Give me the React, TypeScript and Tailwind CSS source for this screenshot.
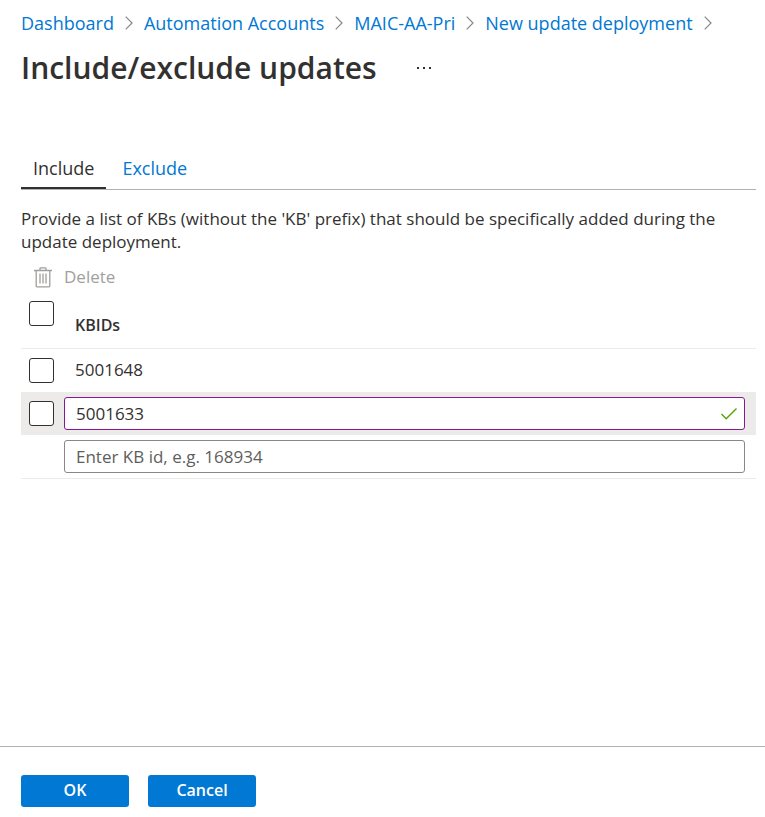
import { useState } from "react";

const crumbs = ["Dashboard", "Automation Accounts", "MAIC-AA-Pri", "New update deployment"];

function Chevron() {
  return (
    <svg aria-hidden="true" viewBox="0 0 8 14" className="h-3.5 w-2 shrink-0" fill="none" stroke="#8a8886" strokeWidth="1.2">
      <path d="M.7 .7 7 7 .7 13.3" />
    </svg>
  );
}

function TrashIcon() {
  return (
    <svg aria-hidden="true" viewBox="0 0 18 21" className="h-[21px] w-[18px] shrink-0" fill="none" stroke="#a19f9d" strokeWidth="1.3">
      <path d="M0 3.5h18M6 3.5V1.6Q6 .9 6.7 .9h4.6Q12 .9 12 1.6v1.9M2.2 3.5v15.6q0 .8.8.8h12q.8 0 .8-.8V3.5" />
      <path d="M6 6.5v10M9 6.5v10M12 6.5v10" />
    </svg>
  );
}

function Check({ label }: { label: string }) {
  return (
    <input
      type="checkbox"
      aria-label={label}
      className="block size-[25px] appearance-none rounded-[3px] border border-[#323130] bg-white checked:bg-[#0078d4]"
    />
  );
}

export default function App() {
  const [kb, setKb] = useState("5001633");
  const [next, setNext] = useState("");

  return (
    <div className="flex min-h-screen flex-col bg-white font-['Open_Sans','Noto_Sans',sans-serif] text-[17px] text-[#323130]">
      <main className="flex-1 pr-[9px] pl-[21px]">
        <nav aria-label="Breadcrumb" className="pt-2.5">
          <ol className="flex items-center gap-[11px] text-lg leading-[26px] whitespace-nowrap text-[#0078d4]">
            {crumbs.map((c) => (
              <li key={c} className="flex items-center gap-[11px]">
                <a href="#">{c}</a>
                <Chevron />
              </li>
            ))}
          </ol>
        </nav>

        <header className="flex items-center gap-10 pt-3">
          <h1 className="text-[30px] leading-10 font-semibold">Include/exclude updates</h1>
          <button type="button" aria-label="More actions" className="flex gap-1">
            <span className="size-0.5 bg-[#323130]" />
            <span className="size-0.5 bg-[#323130]" />
            <span className="size-0.5 bg-[#323130]" />
          </button>
        </header>

        <div role="tablist" className="mt-[60px] flex h-[42px] gap-1 border-b border-[#b3b0ad] text-lg">
          <button role="tab" aria-selected="true" type="button" className="border-b-2 border-[#323130] px-3">
            Include
          </button>
          <button role="tab" aria-selected="false" type="button" className="border-b-2 border-transparent px-3 text-[#0078d4]">
            Exclude
          </button>
        </div>

        <p className="mt-[17px] max-w-[710px] leading-[23px]">
          Provide a list of KBs (without the 'KB' prefix) that should be specifically added during the update deployment.
        </p>

        <button type="button" disabled className="mt-3 ml-[13px] flex h-6 items-center gap-3 text-[#a19f9d]">
          <TrashIcon />
          Delete
        </button>

        <table className="mt-2.5 w-full border-collapse text-left">
          <thead>
            <tr className="h-[49px] border-b border-[#edebe9]">
              <th className="w-[43px] pt-0.5 pl-2 align-top">
                <Check label="Select all" />
              </th>
              <th scope="col" className="pt-1 pl-[11px] text-base font-semibold">KBIDs</th>
            </tr>
          </thead>
          <tbody>
            <tr className="h-11">
              <td className="pl-2">
                <Check label="Select 5001648" />
              </td>
              <td className="pb-0.5 pl-[11px]">5001648</td>
            </tr>
            <tr className="h-[43px] bg-[#edebe9]">
              <td className="pl-2">
                <Check label="Select 5001633" />
              </td>
              <td className="pr-[11px]">
                <div className="relative">
                  <input
                    aria-label="KB id"
                    value={kb}
                    onChange={(e) => setKb(e.target.value)}
                    className="block h-[33px] w-full rounded-[3px] border border-[#881798] bg-white pr-9 pl-[11px] outline-none"
                  />
                  <svg aria-hidden="true" viewBox="0 0 16 12" className="absolute top-[11px] right-2 h-3 w-4" fill="none" stroke="#57a300" strokeWidth="1.4">
                    <path d="M.5 6 5.2 10.7 15.5 .6" />
                  </svg>
                </div>
              </td>
            </tr>
            <tr className="h-[43px] border-b border-[#edebe9]">
              <td />
              <td className="pr-[11px]">
                <input
                  aria-label="New KB id"
                  placeholder="Enter KB id, e.g. 168934"
                  value={next}
                  onChange={(e) => setNext(e.target.value)}
                  className="block h-[33px] w-full rounded-[3px] border border-[#8a8886] bg-white px-[11px] outline-none placeholder:text-[#605e5c]"
                />
              </td>
            </tr>
          </tbody>
        </table>
      </main>

      <footer className="flex gap-[19px] border-t border-[#b3b0ad] px-[21px] pt-7 pb-2.5 text-base font-semibold text-white">
        <button type="button" className="h-8 w-[108px] rounded-[3px] bg-[#0078d4] pb-0.5">OK</button>
        <button type="button" className="h-8 w-[108px] rounded-[3px] bg-[#0078d4] pb-0.5">Cancel</button>
      </footer>
    </div>
  );
}
